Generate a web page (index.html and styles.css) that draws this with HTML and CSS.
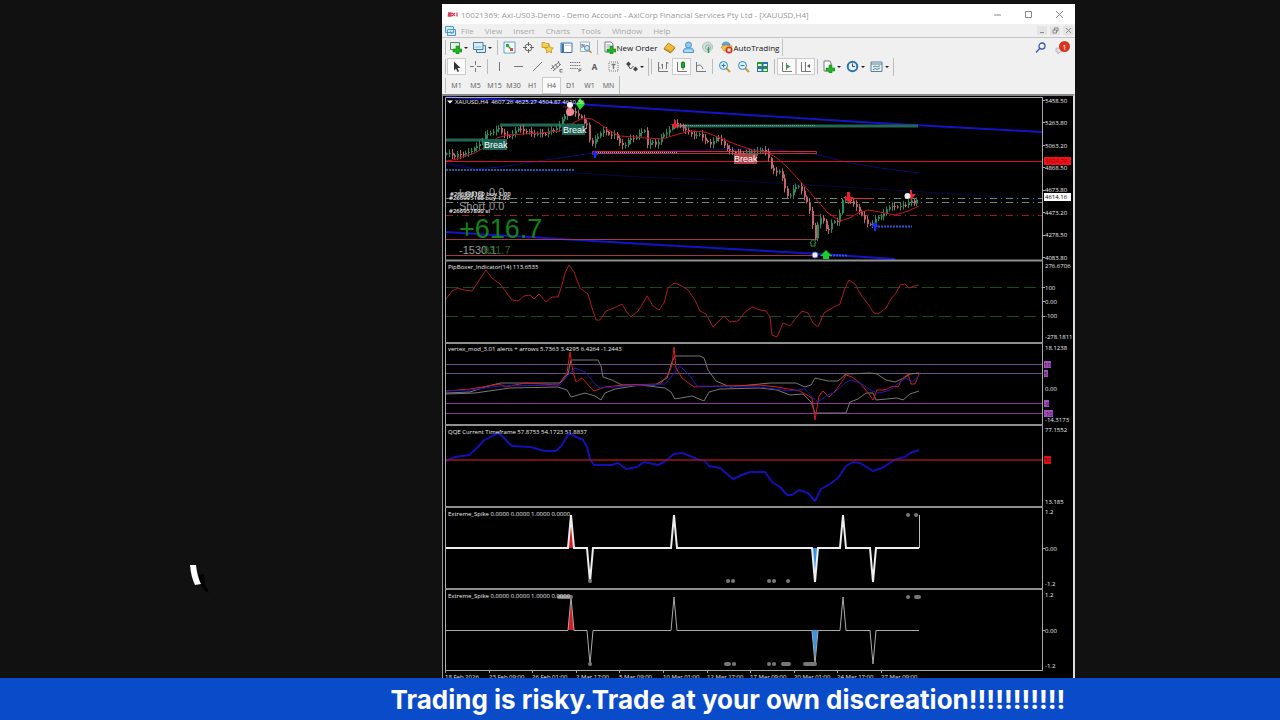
FILE: index.html
```html
<!DOCTYPE html>
<html lang="en">
<head>
    <meta charset="utf-8">
    <title>XAUUSD,H4</title>
    <link rel="stylesheet" href="styles.css">
</head>
<body>
    <main class="stage">
        <div class="side">
            <svg class="cursor-mark" width="20" height="32" viewBox="0 0 20 32">
                <path d="M9 11 L14 10 L15 20 L19 29 L14 26 L10 20 Z" fill="#000"/>
                <path d="M0 1 L6 1 Q7 12 11 20 L5 21 Q1 13 0 1 Z" fill="#fff"/>
            </svg>
        </div>

        <div class="terminal">
            <header class="titlebar">
                <svg width="12" height="8" viewBox="0 0 12 8" fill="none" stroke="#d8405a" stroke-width="1.3"><path d="M1 3h3v3H1.400V4.500H4M5 3l3 3M8 3L5 6M10 2.500v4"/></svg>
                <h1>10021369: Axi-US03-Demo - Demo Account - AxiCorp Financial Services Pty Ltd - [XAUUSD,H4]</h1>
                <div class="window-buttons">
                    <button aria-label="Minimize"><svg width="9" height="9" viewBox="0 0 9 9"><path d="M1 5h7"/></svg></button>
                    <button aria-label="Maximize"><svg width="9" height="9" viewBox="0 0 9 9"><path d="M1.500 1.500h6v6h-6z"/></svg></button>
                    <button aria-label="Close"><svg width="9" height="9" viewBox="0 0 9 9"><path d="M1 1l7 7M8 1L1 8"/></svg></button>
                </div>
            </header>

            <nav class="menubar">
                <svg width="11" height="10" viewBox="0 0 11 10" fill="#d5ebf8" stroke="#5599c8"><path d="M.5.5h8v6h-8zM2.500 3.500h8v6h-8z"/><path d="M4 7l1.500-1.500L7 7.500l2-2" fill="none"/></svg>
                <button>File</button><button>View</button><button>Insert</button><button>Charts</button><button>Tools</button><button>Window</button><button>Help</button>
                <div class="mdi-buttons">
                    <button aria-label="Minimize chart"><svg width="7" height="7" viewBox="0 0 7 7"><path d="M1 5.500h4"/></svg></button>
                    <button aria-label="Restore chart"><svg width="7" height="7" viewBox="0 0 7 7"><path d="M1 3h3.500v3H1zM2.500 3V1H6v3H4.500"/></svg></button>
                    <button aria-label="Close chart"><svg width="7" height="7" viewBox="0 0 7 7"><path d="M1 1l5 5M6 1L1 6"/></svg></button>
                </div>
            </nav>

            <div class="toolbar">
                <i class="grip"></i>
                <button class="drop" aria-label="New chart"><svg viewBox="0 0 13 13"><path d="M1.500 1.500h9v7h-9z" fill="#e8f4e8" stroke="#4c8a68"/><path d="M7 5h3v3h3v3h-3v2H7v-2H4V8h3z" fill="#1db51d" stroke="#0a7a10" stroke-width=".5"/></svg></button>
                <button class="drop" aria-label="Profiles"><svg viewBox="0 0 13 13" fill="#d8ecfa" stroke="#4a7a9c"><path d="M3.500 4.500h9v7h-9z"/><path d="M.5 1.500h9.500v7H.5z"/><path d="M2 6h6" stroke="#8ab6d4"/></svg></button>
                <i class="sep"></i>
                <button aria-label="Market watch"><svg viewBox="0 0 13 13"><path d="M1 1h11v11H1z" fill="#fff" stroke="#58a0d0"/><path d="M3 3h3v3H3zM5 5l3 1-2 2z" fill="#20b030"/><path d="M7 7h3v3H7z" fill="#e05030"/></svg></button>
                <button aria-label="Data window"><svg viewBox="0 0 13 13" fill="none" stroke="#666"><circle cx="6.500" cy="6.500" r="3.500"/><path d="M6.500 1v4M6.500 8v4M1 6.500h4M8 6.500h4"/></svg></button>
                <button aria-label="Navigator"><svg viewBox="0 0 13 13" fill="#f6d24a" stroke="#b48a1c" stroke-width=".7"><path d="M1 1.500h3l1 1h3v4H1z"/><path d="M8 4l1.400 2.600 3 .4-2.200 2 .6 3L8 10.500 5.300 12l.5-3-2.200-2 3-.4z"/></svg></button>
                <button aria-label="Terminal"><svg viewBox="0 0 13 13"><path d="M1 2h11v9.500H1z" fill="#fff" stroke="#3c74b0"/><path d="M1.500 2.500h2.500v8.500H1.500z" fill="#3c74b0"/><path d="M5 4.500h6" stroke="#c0d8ee"/></svg></button>
                <button aria-label="Strategy tester"><svg viewBox="0 0 13 13" fill="none"><path d="M1.500 1h9v9.500h-9z" fill="#eef6fa" stroke="#9ab4c4"/><path d="M3 7V3l2 3V3" stroke="#778"/><circle cx="8" cy="7" r="2.500" fill="#cfe8f8" stroke="#5588b0"/><path d="M10 9l2.500 3" stroke="#c09040" stroke-width="1.500"/></svg></button>
                <i class="sep"></i>
                <button class="wide"><svg viewBox="0 0 13 13"><path d="M2 1h6l2 2v8H2z" fill="#fff" stroke="#778"/><path d="M3.500 4h4M3.500 6h3" stroke="#99a"/><path d="M7 5h3v3h3v3h-3v2H7v-2H4V8h3z" fill="#22b422" stroke="#0a7a10" stroke-width=".5"/></svg>New Order</button>
                <button aria-label="MetaEditor"><svg viewBox="0 0 13 13"><path d="M1 7.500L5.500 2 12 6.500 7.500 11z" fill="#f1bb38" stroke="#a87410" stroke-width=".8"/><path d="M1 8l6.500 4L12 7" fill="none" stroke="#a87410"/></svg></button>
                <button aria-label="Community"><svg viewBox="0 0 13 13" fill="#8ccaf2" stroke="#3a86c0" stroke-width=".8"><circle cx="6.500" cy="4" r="3"/><path d="M1.500 11.500c-1-4 2-4.500 5-4.500s6 .5 5 4.500z"/><path d="M3 10h7" stroke="#dff"/></svg></button>
                <button aria-label="Signals"><svg viewBox="0 0 13 13" fill="none"><circle cx="6.500" cy="6" r="5" fill="#d5dede" stroke="#b4c0c0"/><circle cx="7" cy="6.500" r="2.500" stroke="#7ac0a4"/><path d="M7.500 6v6" stroke="#2da048" stroke-width="1.500"/></svg></button>
                <button class="wide auto"><svg viewBox="0 0 13 13"><path d="M1 6l5-3 6 2-2 5H4z" fill="#f5c63c" stroke="#b08420" stroke-width=".6"/><path d="M2 4c0-4 8-4 8 0z" fill="#65a9df" stroke="#3a78b0" stroke-width=".6"/><circle cx="9" cy="9" r="3.500" fill="#d8341c"/><path d="M7.500 7.500h3v3h-3z" fill="#fff"/></svg>AutoTrading</button>
                <div class="right">
                    <button aria-label="Search"><svg viewBox="0 0 13 13" fill="none" stroke="#3b58b8" stroke-width="1.300"><circle cx="8" cy="5" r="3"/><path d="M6 7l-4 4.500"/></svg></button>
                    <button class="bell" aria-label="Notifications"><svg viewBox="0 0 13 13"><path d="M1 7h6v4H5l-2 2v-2H1z" fill="#ddd" stroke="#aaa" stroke-width=".6"/></svg><span class="badge">1</span></button>
                </div>
            </div>

            <div class="toolbar">
                <i class="grip"></i>
                <button class="on" aria-label="Cursor"><svg viewBox="0 0 13 13"><path d="M4 1.500v9l2-2 1.500 3.500 1.500-.7L7.500 8h3z" fill="#333"/></svg></button>
                <button aria-label="Crosshair"><svg class="line" viewBox="0 0 13 13"><path d="M6.500 1v4M6.500 8v4M1 6.500h4M8 6.500h4"/></svg></button>
                <i class="sep"></i>
                <button aria-label="Vertical line"><svg class="line" viewBox="0 0 13 13"><path d="M6.500 2v9"/></svg></button>
                <button aria-label="Horizontal line"><svg class="line" viewBox="0 0 13 13"><path d="M2 6.500h9"/></svg></button>
                <button aria-label="Trendline"><svg class="line" viewBox="0 0 13 13"><path d="M2 11l9-9"/></svg></button>
                <button aria-label="Channel"><svg class="line" viewBox="0 0 13 13"><path d="M1 9l8-7M3 11l8-7M2 5l3 5M5 4l3 4M8 1l2 4M10 9.500h2.500M10 12h2.500M10 9v3"/></svg></button>
                <button aria-label="Fibonacci"><svg class="line" viewBox="0 0 13 13"><path d="M1 2.500h11M1 5.500h11M1 8.500h8" stroke-dasharray="1.500 .7"/><path d="M10 12V9h2.500M10 10.500h2"/></svg></button>
                <button class="letter" aria-label="Text">A</button>
                <button aria-label="Label"><svg class="line" viewBox="0 0 13 13"><path d="M2 2h9v9H2z" stroke-dasharray="1 1"/><path d="M4.500 4.500h4M6.500 4.500V9" stroke-width="1.300"/></svg></button>
                <button class="drop" aria-label="Arrows"><svg viewBox="0 0 13 13" fill="#444"><path d="M1 4l2.500-2.500L6 4 3.500 6.500zM8 9l2.500-2.500L13 9l-2.500 2.500z"/><path d="M3.500 6l2 3 3-3" fill="none" stroke="#444"/></svg></button>
                <i class="end"></i>
                <i class="grip"></i>
                <button aria-label="Bar chart"><svg class="line" viewBox="0 0 13 13"><path d="M2.500 2v9.500H12M2.500 8h2M6.500 4v5M6.500 5H5M10.500 2v7M10.500 3h2"/></svg></button>
                <button class="on" aria-label="Candlesticks"><svg class="line" viewBox="0 0 13 13"><path d="M2.500 2v9.500H12M8 1v9"/><path d="M6.500 2.500h3v5h-3z" fill="#20b030" stroke="#108020"/></svg></button>
                <button aria-label="Line chart"><svg class="line" viewBox="0 0 13 13"><path d="M2.500 2v9.500H12M3 6q4-3 6 3"/></svg></button>
                <i class="sep"></i>
                <button aria-label="Zoom in"><svg viewBox="0 0 13 13"><path d="M8 8l4 4" stroke="#c89a38" stroke-width="2"/><circle cx="5.500" cy="5.500" r="4" fill="#d8effc" stroke="#3a86c4"/><path d="M3.500 5.500h4M5.500 3.500v4" stroke="#3a76b4"/></svg></button>
                <button aria-label="Zoom out"><svg viewBox="0 0 13 13"><path d="M8 8l4 4" stroke="#c89a38" stroke-width="2"/><circle cx="5.500" cy="5.500" r="4" fill="#d8effc" stroke="#3a86c4"/><path d="M3.500 5.500h4" stroke="#3a76b4"/></svg></button>
                <button aria-label="Tile windows"><svg viewBox="0 0 13 13"><path d="M1 2h11v10H1z" fill="#2b70b4"/><path d="M1 2h5v5H1zM7 7h5v5H7z" fill="#27962c"/><path d="M2 4h3.500v2H2zM7.500 4H11v2H7.500zM2 9h3.500v2H2zM7.500 9H11v2H7.500z" fill="#e5f5e5"/></svg></button>
                <i class="sep"></i>
                <button class="on" aria-label="Auto scroll"><svg class="line" viewBox="0 0 13 13"><path d="M2.500 2v9.500H12M6.500 3v7"/><path d="M7 4.500l3.500 2L7 8.500z" fill="#28a048" stroke="none"/></svg></button>
                <button class="on" aria-label="Chart shift"><svg class="line" viewBox="0 0 13 13"><path d="M2.500 2v9.500H12M6.500 2v9"/><path d="M8 6l3-2v4z" fill="#555" stroke="none"/></svg></button>
                <i class="sep"></i>
                <button class="drop" aria-label="Indicators"><svg viewBox="0 0 13 13"><path d="M2 1h6l1 2v8H2z" fill="#fff" stroke="#778"/><path d="M7 5h3v3h3v3h-3v2H7v-2H4V8h3z" fill="#22b422" stroke="#0a7a10" stroke-width=".5"/></svg></button>
                <button class="drop" aria-label="Periods"><svg viewBox="0 0 13 13"><circle cx="6.500" cy="6.500" r="4.800" fill="#e5f2fb" stroke="#2b73b4" stroke-width="2"/><path d="M6.500 3.500v3h2.500" fill="none" stroke="#446"/></svg></button>
                <button class="drop" aria-label="Templates"><svg viewBox="0 0 13 13" fill="#e8f4f8" stroke="#5a8296"><path d="M1 2h11v9.500H1z"/><path d="M1 4h11M3 7l2-1 2 1 3-1.500M3 10l2-1.500 2 1L10 8" fill="none"/></svg></button>
                <i class="end"></i>
            </div>

            <div class="toolbar periods">
                <i class="grip"></i>
                <button>M1</button><button>M5</button><button>M15</button><button>M30</button><button>H1</button><button class="on">H4</button><button>D1</button><button>W1</button><button>MN</button>
                <i class="end"></i>
            </div>

            <div class="charts">
                <!-- price -->
                <svg class="pane" viewBox="445 96 628 166">
                    <g fill="none">
                        <g class="navy">
                            <path d="M446 163 L475 169 L500 167 L545 160 L593 153 L660 151 L745 149 L780 150 L815 154 L850 163 L880 168 L919 173"/>
                            <path d="M446 165 L480 170 L560 172 L640 177 L740 181 L860 188 L940 193 L1042 200" opacity=".6"/>
                        </g>
                        <path class="trend" d="M446 97 L560 103 L640 108 L860 122 L1042 132"/>
                        <path class="trend" d="M446 232 L660 245 L820 254 L895 259"/>
                        <path d="M446 140h40M500 125h75M676 126h242" stroke="#226653" stroke-width="3"/>
                        <path d="M676 125.500h140" stroke="#75a397" stroke-dasharray="1 1"/>
                        <path d="M446 161.500h596" stroke="#d01822"/>
                        <path d="M592.500 151.500h224v2h-224z" stroke="#c02c30"/>
                        <path d="M596 152.500h82" stroke="#a090ff" stroke-dasharray="1 1"/>
                        <path d="M446 239.500h371M446 255.500h369" stroke="#9c3c42"/>
                        <path d="M446 170h128" stroke="#2c5a9c" stroke-width="2" stroke-dasharray="2 1"/>
                        <path d="M446 198.500h596M446 202.500h596" stroke="#6c896f" stroke-dasharray="7 4 1 4"/>
                        <path d="M446 215.500h596" stroke="#a01826" stroke-dasharray="7 4 1 4"/>
                        <path d="M878 226.500h34M830 255.500h18" stroke="#2f58d8" stroke-width="2" stroke-dasharray="2 1"/>
                        <path d="M846 198.500h28M596 153.500h60" stroke="#d03038"/>
                    </g>
                    <g id="candles"></g>
                    <path class="average" d="M446 161 L453 160 L475 153 L487 146 L497 138 L507 135 L540 133 L560 131 L567 127 L575 122 L583 118 L592 119 L600 124 L610 131 L620 136 L635 137 L645 138 L662 139 L675 135 L690 131 L705 132 L718 137 L735 144 L752 150 L768 153 L777 158 L787 167 L800 181 L815 198 L828 213 L840 221 L850 218 L858 213 L868 210 L880 212 L895 215 L908 211 L919 206"/>
                    <g fill="#e8222a">
                        <path d="M674 120h2v4h3l-4 5-4-5h3zM847 192h3v5h4l-5 6-6-6h4zM910 190h2v4h4l-5 6-5-6h4z"/>
                    </g>
                    <path d="M594 158v-3h-2l3-5 3 5h-2v3zM874 231v-4h-3l4-5 4 5h-3v4z" fill="#1d28f5"/>
                    <circle cx="907.500" cy="196" r="3" fill="#eee"/>
                    <path d="M810 243l3-4 3 4h-1v3h-4v-3z" fill="#000" stroke="#249a2e"/>
                    <circle cx="815" cy="255" r="3" fill="#f4f4ff" stroke="#5560f0"/>
                    <path d="M820 256l6-6 6 6h-3v3h-6v-3z" fill="#16cf2c"/>
                    <path d="M563 107h5v7" fill="none" stroke="#901820"/>
                    <circle cx="570" cy="105" r="3" fill="#f4f0ff"/><circle cx="570" cy="112" r="4" fill="#f28893"/>
                    <path d="M576 104l4-6 5 6-5 6z" fill="#1ee026"/>
                    <g class="break"><rect x="483" y="139" width="24" height="11"/><rect x="562" y="124" width="23" height="11"/><rect x="734" y="154" width="23" height="10" class="down"/>
                        <text x="484" y="148">Break</text><text x="563" y="133">Break</text><text x="734" y="162">Break</text></g>
                    <path d="M447 100.500h6l-3 3z" fill="#fff"/>
                    <text x="455" y="104">XAUUSD,H4&#160; 4607.26 4625.27 4504.87 4610.36</text>
                    <g class="stats">
                        <text x="459" y="197">Long</text><text x="489" y="196">0.0</text>
                        <text x="459" y="210">Short</text><text x="489" y="210">0.0</text>
                        <text x="459" y="254">-1530.1</text><text x="483" y="254" fill="#176f1e">931.7</text>
                        <text class="pips" x="459" y="238">+616.7</text>
                    </g>
                    <g class="orders"><text x="450" y="196">#266998160 buy 1.00</text><text x="449" y="200">#266995160 buy 1.00</text><text x="449" y="213">#266957890 sl</text></g>
                    <path class="frame" d="M445.500 262V97.500h597V262"/>
                    <path class="divider" d="M445 260.500h598"/>
                    <path class="ticks" d="M1043 100.500h2M1043 122.500h2M1043 145.500h2M1043 167.500h2M1043 190.500h2M1043 212.500h2M1043 235.500h2M1043 257.500h2"/>
                    <text x="1045" y="103">5458.50</text><text x="1045" y="125">5263.80</text><text x="1045" y="148">5063.20</text><text x="1045" y="170">4868.50</text><text x="1045" y="192">4673.80</text><text x="1045" y="215">4473.20</text><text x="1045" y="237">4278.50</text><text x="1045" y="260">4083.80</text>
                    <rect x="1044" y="157" width="27" height="8" fill="#f01016"/><text x="1045" y="163" fill="#8c0c10">4924.78</text>
                    <rect x="1044" y="193" width="27" height="8" fill="#fff"/><text x="1045" y="199" fill="#000">4614.16</text>
                </svg>

                <!-- PipBoxer -->
                <svg class="pane" viewBox="445 262 628 82">
                    <path d="M446 287.500h596M446 316.500h596" stroke="#164d1e" stroke-dasharray="12 5"/>
                    <path class="curve" stroke="#ae1a22" d="M446 299 L452 291 L458 288 L464 290 L472 291 L478 282 L486 270 L492 278 L500 284 L506 292 L512 300 L518 301 L524 296 L530 295 L534 299 L539 294 L546 302 L552 297 L558 297 L562 285 L565 273 L569 265 L574 272 L580 288 L588 294 L592 308 L596 320 L600 320 L606 311 L614 308 L622 304 L626 311 L631 317 L638 311 L642 305 L647 296 L653 306 L659 310 L664 303 L668 288 L674 283 L680 285 L688 290 L695 300 L700 311 L706 314 L713 327 L719 321 L724 316 L730 322 L738 321 L745 312 L752 307 L760 310 L766 311 L770 317 L772 335 L777 337 L783 323 L790 326 L796 318 L802 311 L808 313 L813 323 L818 327 L824 313 L832 308 L840 304 L845 288 L849 280 L855 284 L861 295 L868 304 L874 313 L878 314 L886 308 L891 299 L896 293 L900 285 L905 284 L909 288 L914 286 L919 285"/>
                    <text x="448" y="269">PipBoxer_Indicator(14) 113.6535</text>
                    <path class="frame" d="M445.500 262v82M1042.500 262v82"/><path class="divider" d="M445 343h598"/>
                    <path class="ticks" d="M1043 287.500h2M1043 301.500h2M1043 316.500h2"/>
                    <text x="1045" y="268">276.6706</text><text x="1045" y="290">100</text><text x="1045" y="304">0.00</text><text x="1045" y="318">-100</text><text x="1045" y="339">-278.1811</text>
                </svg>

                <!-- vertex -->
                <svg class="pane" viewBox="445 344 628 82">
                    <path d="M446 364.500h596M446 373.500h596" stroke="#6c4d8c"/><path d="M446 403.500h596M446 413.500h596" stroke="#823a96"/>
                    <g class="curve">
                        <path stroke="#777" d="M446 393 L470 392 L485 387 L500 383 L520 383 L560 383 L568 374 L571 360 L598 360 L601 366 L603 377 L612 380 L622 385 L655 385 L667 378 L672 362 L675 356 L700 356 L704 358 L708 370 L716 381 L730 387 L750 385 L770 383 L796 383 L805 387 L811 385 L815 378 L828 381 L838 381 L846 374 L870 373 L877 374 L886 380 L895 382 L904 378 L910 374 L919 373"/>
                        <path stroke="#777" d="M446 394 L475 393 L510 388 L558 387 L567 390 L571 397 L585 393 L595 396 L601 400 L605 393 L615 389 L640 385 L665 388 L671 392 L675 399 L692 396 L704 401 L709 392 L720 389 L760 388 L777 390 L790 395 L803 394 L811 402 L815 413 L846 413 L850 402 L858 399 L866 393 L873 393 L876 400 L897 398 L903 400 L910 394 L919 391"/>
                        <path stroke="#d41c20" d="M446 391 L470 389 L500 384 L505 387 L525 383 L558 385 L567 373 L570 352 L573 372 L576 382 L582 378 L590 387 L594 391 L605 387 L625 385 L660 384 L668 375 L672 365 L674 347 L676 368 L682 378 L694 387 L720 386 L760 385 L777 387 L800 391 L812 398 L815 420 L819 396 L823 391 L829 397 L836 390 L843 380 L846 375 L852 377 L860 383 L869 394 L873 400 L877 390 L885 390 L893 386 L898 387 L902 379 L908 374 L911 384 L915 384 L919 374"/>
                        <path stroke="#2218b8" d="M446 391 L470 390 L500 386 L560 385 L568 375 L575 368 L585 372 L595 384 L600 388 L625 386 L665 384 L672 376 L680 366 L690 376 L697 386 L760 387 L790 391 L805 389 L812 397 L818 402 L826 396 L835 392 L845 383 L851 380 L862 384 L872 391 L880 393 L890 390 L900 382 L906 378 L912 382 L919 376"/>
                    </g>
                    <text x="448" y="351">vertex_mod_3.01 alerts + arrows 5.7363 3.4295 6.4264 -1.2443</text>
                    <path class="frame" d="M445.500 344v82M1042.500 344v82"/><path class="divider" d="M445 425h598"/>
                    <g fill="#a44fc0"><rect x="1044" y="361" width="7" height="7"/><rect x="1044" y="370" width="4" height="7"/><rect x="1044" y="400" width="5" height="7"/><rect x="1044" y="410" width="9" height="7"/></g>
                    <g fill="#2c1036"><text x="1044" y="367">10</text><text x="1044" y="376">5</text><text x="1044" y="406">-6</text><text x="1044" y="416">-10</text></g>
                    <text x="1045" y="350">18.1238</text><text x="1045" y="391">0.00</text><text x="1045" y="422">-14.3173</text>
                </svg>

                <!-- QQE -->
                <svg class="pane" viewBox="445 426 628 82">
                    <path class="curve" stroke="#1410b4" stroke-width="2" d="M446 461 L455 457 L469 455 L477 448 L483 441 L492 436 L498 433 L503 437 L512 446 L530 447 L545 451 L556 451 L562 445 L569 433 L574 436 L583 440 L587 447 L590 459 L594 465 L612 465 L618 463 L626 469 L637 467 L644 462 L658 465 L664 462 L674 454 L682 453 L690 456 L697 459 L705 461 L709 466 L720 468 L733 479 L742 475 L750 472 L765 472 L772 482 L780 487 L787 495 L792 495 L799 490 L808 493 L815 501 L821 489 L830 484 L838 478 L846 466 L853 462 L860 463 L873 471 L884 467 L896 459 L905 457 L910 453 L919 450"/>
                    <path d="M446 460h596" stroke="#9c1518" stroke-width="1.500"/>
                    <text x="448" y="434">QQE Current Timeframe 57.8753 54.1723 51.8837</text>
                    <path class="frame" d="M445.500 426v82M1042.500 426v82"/><path class="divider" d="M445 507h598"/>
                    <rect x="1044" y="456" width="7" height="8" fill="#d81016"/><text x="1044" y="462" fill="#700">50</text>
                    <text x="1045" y="432">77.1552</text><text x="1045" y="504">13.185</text>
                </svg>

                <!-- spikes -->
                <svg class="pane" viewBox="445 508 628 82">
                    <path d="M568 548L571 518L574 548z" fill="#d81822"/><path d="M812 548L815 580L818 548z" fill="#3795e8"/>
                    <path class="spike bold" d="M446 548H568L571 515L574 548H587L590 582L593 548H671L674 515L677 548H812L815 582L818 548H840L843 515L846 548H870L873 582L876 548H919"/>
                    <path d="M919.500 548v-33" stroke="#bbb"/>
                    <g class="dots"><path d="M728 581h.1M733 581h.1M769 581h.1M774 581h.1M788 581h.1M590 581h.1M908 515h.1M916 515h.1"/></g>
                    <text x="448" y="516">Extreme_Spike 0.0000 0.0000 1.0000 0.0000</text>
                    <path class="frame" d="M445.500 508v82M1042.500 508v82"/><path class="divider" d="M445 589h598"/>
                    <path class="ticks" d="M1043 548.500h2"/>
                    <text x="1045" y="514">1.2</text><text x="1045" y="551">0.00</text><text x="1045" y="586">-1.2</text>
                </svg>

                <svg class="pane" viewBox="445 590 628 92">
                    <path d="M568 630L571 600L574 630z" fill="#d81822"/><path d="M812 630L815 661L818 630z" fill="#3795e8"/>
                    <path class="spike" d="M446 630.500H568L571 597L574 630.500H587L590 664L593 630.500H671L674 597L677 630.500H812L815 664L818 630.500H840L843 597L846 630.500H870L873 664L876 630.500H919"/>
                    <g class="dots"><path d="M726 664h3M734 664h.1M769 664h.1M774 664h.1M783 664h6M805 664h10M590 664h.1M908 597h.1M916 597h3M559 597h12"/></g>
                    <text x="448" y="598">Extreme_Spike 0.0000 0.0000 1.0000 0.0000</text>
                    <path class="frame" d="M445.500 590v80.500h597V590"/>
                    <path class="ticks" d="M1043 630.500h2"/>
                    <text x="1045" y="597">1.2</text><text x="1045" y="633">0.00</text><text x="1045" y="668">-1.2</text>
                    <g id="dates"></g>
                </svg>
            </div>
        </div>
    </main>

    <footer class="banner">Trading is risky.Trade at your own discreation!!!!!!!!!!!</footer>

    <script src="chart.js"></script>
</body>
</html>
```
FILE: styles.css
```css
* {
    box-sizing: border-box;
}

body {
    margin: 0;
    height: 100vh;
    display: flex;
    flex-direction: column;
    background: #111;
    font-family: "Open Sans", "Noto Sans", sans-serif;
}

.stage {
    flex: 1;
    min-height: 0;
    display: grid;
    grid-template-columns: 442fr 633fr 205fr;
    grid-template-rows: 100%;
    padding-top: 4px;
    overflow: hidden;
}

.side {
    display: flex;
    align-items: flex-end;
    padding-left: 43%;
    padding-bottom: 82px;
}

.terminal {
    background: #f0f0f0;
    overflow: hidden;
    min-width: 0;
}

button {
    border: 0;
    padding: 0;
    background: none;
    font: inherit;
    color: inherit;
}

svg {
    display: block;
    flex: none;
}

.titlebar {
    display: flex;
    align-items: center;
    height: 20px;
    padding-left: 5px;
    gap: 2px;
    background: #fff;
    color: #999;
}

.titlebar h1 {
    flex: 1;
    margin: 0;
    font-size: 8px;
    font-weight: 400;
    white-space: nowrap;
}

.window-buttons {
    display: flex;
}

.window-buttons button {
    display: flex;
    justify-content: center;
    width: 31px;
}

.window-buttons svg,
.mdi-buttons svg {
    fill: none;
    stroke: #888;
}

.menubar {
    display: flex;
    align-items: center;
    gap: 11px;
    height: 14px;
    padding: 0 2px 0 3px;
    border-bottom: 1px solid #c4c4c4;
    font-size: 8px;
    color: #aaa;
}

.menubar > svg {
    margin-right: -6px;
}

.mdi-buttons {
    display: flex;
    gap: 3px;
    margin-left: auto;
}

.mdi-buttons button {
    display: flex;
    align-items: center;
    justify-content: center;
    width: 10px;
    height: 9px;
    background: #e4e4e4;
}

.toolbar {
    display: flex;
    align-items: center;
    height: 19px;
    padding-left: 2px;
    font-size: 8px;
    color: #111;
    white-space: nowrap;
}

.toolbar button {
    display: flex;
    align-items: center;
    justify-content: center;
    flex: none;
    width: 19px;
    height: 17px;
    color: #555;
}

.toolbar button svg {
    width: 13px;
    height: 13px;
}

.toolbar .on {
    background: #fafafa;
    border: 1px solid #ccc;
}

.toolbar .letter {
    font-weight: 700;
}

.toolbar .drop {
    width: 24px;
    justify-content: flex-start;
    padding-left: 2px;
}

.toolbar .drop::after {
    content: "";
    margin-left: 2px;
    border: 2px solid transparent;
    border-top-color: #222;
    border-bottom: 0;
}

.toolbar .wide {
    width: 60px;
    gap: 1px;
    color: #111;
}

.toolbar .wide.auto {
    width: 66px;
    border-right: 1px solid #c4c4c4;
}

.grip,
.sep,
.end {
    flex: none;
    height: 15px;
    margin: 0 1px;
    border-left: 1px solid #bbb;
}

.sep {
    margin: 0 2px;
}

.end {
    height: 18px;
}

.line {
    fill: none;
    stroke: #777;
}

.right {
    display: flex;
    margin-left: auto;
    margin-right: 4px;
    gap: 2px;
}

.bell {
    position: relative;
}

.badge {
    position: absolute;
    top: 2px;
    right: 1px;
    width: 11px;
    height: 11px;
    border-radius: 50%;
    background: #d9341e;
    color: #fff;
    line-height: 11px;
}

.periods {
    height: 18px;
    font-size: 7px;
}

/* charts */

.charts {
    background: #000;
    padding-left: 2px;
    border-top: 2px solid #888;
    border-left: 1px solid #999;
    border-right: 2px solid #ddd;
}

.pane {
    width: 100%;
}

.pane text {
    font-size: 6px;
}

.pane text:not([fill]) {
    fill: #eee;
}

.pane g[fill] text:not([fill]) {
    fill: inherit;
}

.pane .orders text {
    font-weight: 600;
}

.frame,
.ticks {
    fill: none;
    stroke: #aaa;
}

.divider {
    stroke: #909090;
    stroke-width: 2;
}

.trend {
    stroke: #1414c4;
    stroke-width: 2;
}

.navy {
    stroke: #0c0c70;
}

.average,
.curve {
    fill: none;
    stroke-linejoin: round;
}

.average {
    stroke: #c4181c;
}

.bull {
    fill: #2a8a5c;
}

.bear {
    fill: #c0646c;
}

.tick {
    fill: #aaa;
}

.break rect {
    fill: #1b6353;
}

.break .down {
    fill: #b04048;
}

.pane .break text {
    font-family: "Liberation Sans", sans-serif;
    font-size: 9px;
    fill: #fff;
}

.pane .stats text {
    font-family: "Liberation Sans", sans-serif;
    font-size: 11px;
}

.pane .stats text:not([fill]) {
    fill: #999;
}

.pane .stats .pips:not([fill]) {
    font-size: 27px;
    fill: #148018;
}

.spike {
    fill: none;
    stroke: #aaa;
}

.spike.bold {
    stroke: #eee;
    stroke-width: 2;
}

.dots {
    stroke: #777;
    stroke-width: 4;
    stroke-linecap: round;
}

.banner {
    height: 42px;
    padding-left: 176px;
    background: #0a4bca;
    color: #fff;
    font-family: Inter, sans-serif;
    font-size: 26px;
    font-weight: 700;
    line-height: 44px;
    text-align: center;
    white-space: nowrap;
}
```
FILE: chart.js
```js
const SVG = 'http://www.w3.org/2000/svg';

// turning points of the H4 price, in chart units
const price = [
    [446,154],[450,152],[455,155],[459,151],[463,154],[467,152],[471,153],[476,149],[481,145],[485,136],
    [489,133],[494,130],[499,126],[502,131],[507,135],[511,137],[515,133],[520,130],[525,133],[530,131],
    [535,133],[540,130],[545,134],[550,130],[555,132],[560,127],[564,119],[568,112],[574,110],[578,113],
    [582,116],[585,122],[588,125],[591,148],[594,143],[600,136],[605,131],[610,136],[616,132],[620,141],
    [625,145],[630,138],[635,140],[640,135],[645,132],[647,147],[653,141],[657,144],[663,133],[668,131],
    [675,124],[680,128],[687,132],[693,135],[700,132],[705,138],[711,144],[717,139],[722,143],[727,150],
    [732,152],[740,151],[748,151],[756,152],[764,152],[768,155],[771,168],[776,172],[781,169],[784,180],
    [786,193],[790,196],[794,189],[798,186],[804,196],[810,212],[814,230],[816,238],[819,216],[823,216],
    [828,230],[833,220],[838,223],[843,202],[848,200],[853,204],[858,207],[864,216],[868,222],[872,224],
    [877,218],[882,218],[888,210],[893,207],[899,206],[903,203],[907,203],[911,198],[915,203],[920,196]
];

function priceAt(x) {
    const i = Math.max(1, price.findIndex(p => p[0] >= x));
    const [x0, y0] = price[i - 1];
    const [x1, y1] = price[i];
    return y0 + (y1 - y0) * (x - x0) / (x1 - x0);
}

function rect(parent, x, y, width, height, name) {
    const el = document.createElementNS(SVG, 'rect');
    el.setAttribute('x', x);
    el.setAttribute('y', y);
    el.setAttribute('width', width);
    el.setAttribute('height', height);
    el.setAttribute('class', name);
    parent.appendChild(el);
}

const candles = document.getElementById('candles');
let open = priceAt(446);
for (let i = 0; i < 172; i++) {
    const x = Math.round(447 + i * 2.75);
    const noise = Math.sin(i * 12.9898) * 2;
    const close = priceAt(x) + noise;
    const top = Math.min(open, close);
    const height = Math.max(1, Math.abs(close - open));
    const name = close < open ? 'bull' : 'bear';
    const wick = 1 + Math.abs(Math.sin(i * 4.1)) * 3;
    rect(candles, x - 1, top, 2, height, name);
    rect(candles, x - 1, top - wick, 1, height + wick * 2, name);
    open = close;
}

const dates = document.getElementById('dates');
const labels = ['18 Feb 2026', '23 Feb 09:00', '26 Feb 01:00', '2 Mar 17:00', '5 Mar 09:00', '10 Mar 01:00',
    '12 Mar 17:00', '17 Mar 09:00', '20 Mar 01:00', '24 Mar 17:00', '27 Mar 09:00'];
labels.forEach((label, i) => {
    const x = Math.round(445 + i * 43.6);
    const text = document.createElementNS(SVG, 'text');
    text.setAttribute('x', x);
    text.setAttribute('y', 679);
    text.textContent = label;
    dates.appendChild(text);
    rect(dates, x, 670, 1, 3, 'tick');
});
```
